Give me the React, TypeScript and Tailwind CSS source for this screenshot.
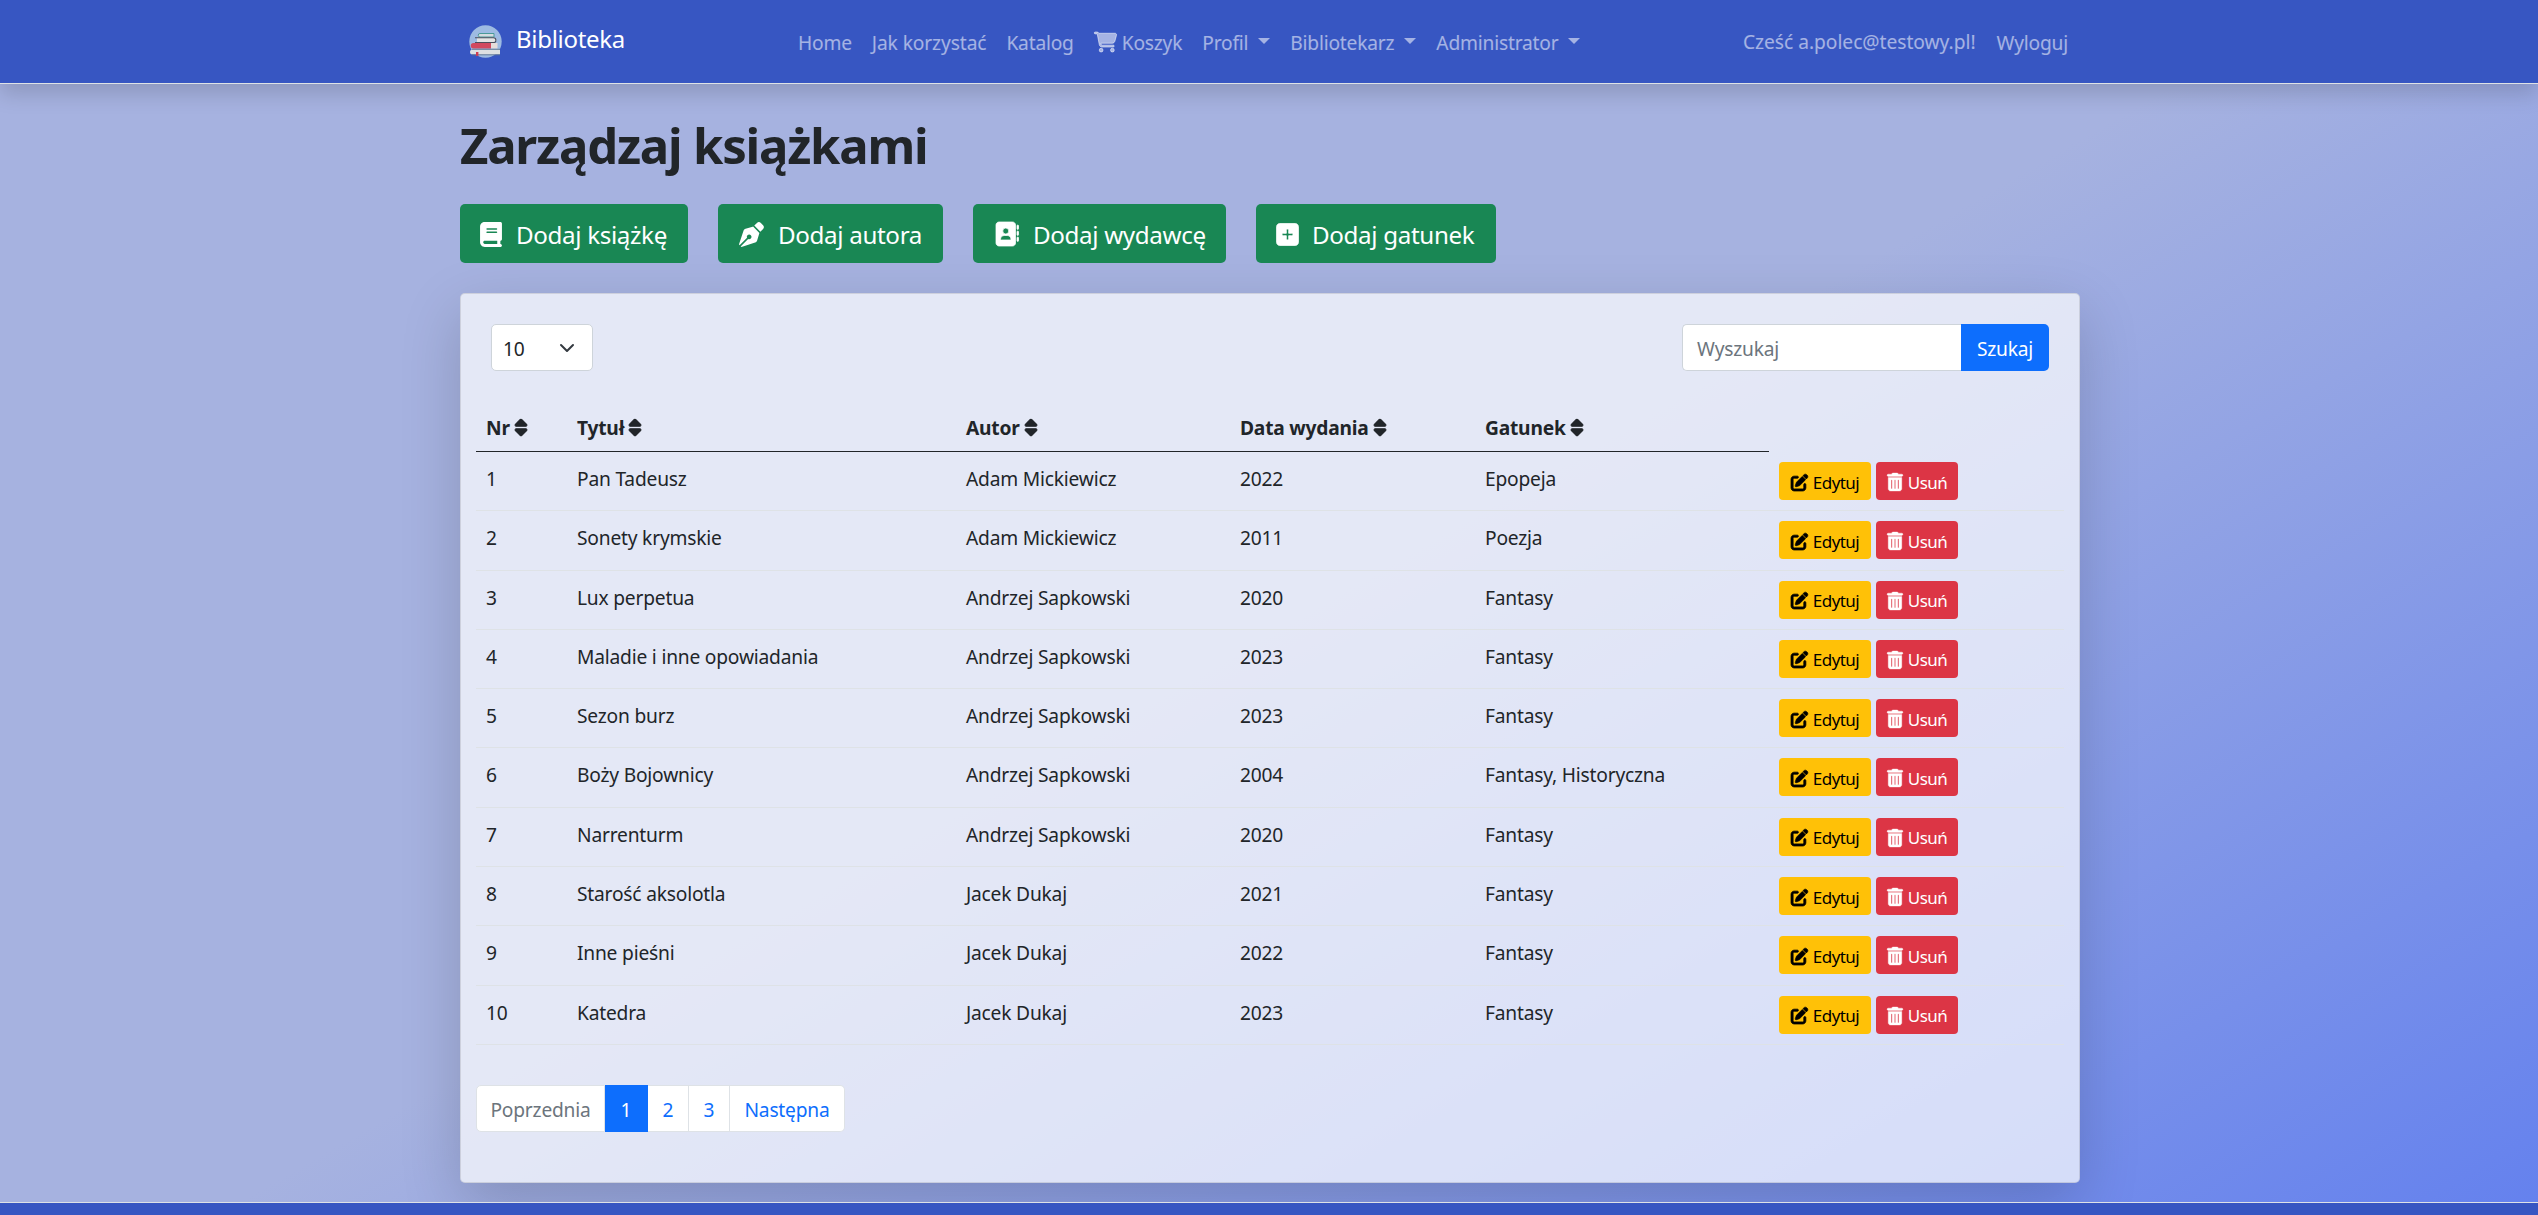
import React from "react";
import { FaAddressBook, FaBook, FaCartShopping, FaPenNib, FaPenToSquare, FaSort, FaSquarePlus, FaTrashCan } from "react-icons/fa6";

const books = [
  ["Pan Tadeusz", "Adam Mickiewicz", "2022", "Epopeja"],
  ["Sonety krymskie", "Adam Mickiewicz", "2011", "Poezja"],
  ["Lux perpetua", "Andrzej Sapkowski", "2020", "Fantasy"],
  ["Maladie i inne opowiadania", "Andrzej Sapkowski", "2023", "Fantasy"],
  ["Sezon burz", "Andrzej Sapkowski", "2023", "Fantasy"],
  ["Boży Bojownicy", "Andrzej Sapkowski", "2004", "Fantasy, Historyczna"],
  ["Narrenturm", "Andrzej Sapkowski", "2020", "Fantasy"],
  ["Starość aksolotla", "Jacek Dukaj", "2021", "Fantasy"],
  ["Inne pieśni", "Jacek Dukaj", "2022", "Fantasy"],
  ["Katedra", "Jacek Dukaj", "2023", "Fantasy"],
];

const cols = "grid grid-cols-[91px_389px_274px_245px_294px_295px]";

function Logo() {
  return (
    <svg viewBox="0 0 33 33" className="h-[33px] w-[33px]">
      <circle cx="16.5" cy="16.5" r="16.2" fill="#9dbbe2" />
      <path d="M11 8.5h14v3.5H11a1.7 1.7 0 0 1 0-3.5z" fill="#d5dbe0" stroke="#4a9a98" strokeWidth="1" />
      <path d="M8 12.8h17a2.4 2.4 0 0 1 0 4.8H8z" fill="#e4e4e4" />
      <path d="M6 12.8h18.500a2.400 2.400 0 0 1 0 4.800H6" fill="none" stroke="#4a4f5c" strokeWidth="1.100" />
      <path d="M4.500 18H22v5.500H4.500a2.700 2.700 0 0 1 0-5.500z" fill="#d1495f" />
      <path d="M22 18h6.500v5.500H22z" fill="#e6ddda" />
      <path d="M3.500 24.500H31v5H3.500a2.500 2.500 0 0 1 0-5z" fill="#dde0e2" />
      <path d="M3 24.300h28M3 29.800h28" stroke="#5e7590" strokeWidth=".9" />
      <path d="M7 27h2.400v4.500l-1.200-1L7 31.500z" fill="#cf3b50" />
    </svg>
  );
}

const Caret = () => <span className="ml-[10px] mb-[5px] inline-block border-x-[6px] border-t-[6px] border-x-transparent border-t-current" />;

function AddButton({ icon, label, width }: { icon: React.ReactNode; label: string; width: string }) {
  return (
    <button className={`flex h-[59px] items-center rounded-[5px] bg-[#198754] pl-5 text-[24.2px] text-white ${width}`}>
      {icon}
      <span className="whitespace-nowrap pt-[3px] tracking-[-0.35px]">{label}</span>
    </button>
  );
}

export default function App() {
  return (
    <div className="flex h-[1215px] w-[2538px] flex-col overflow-hidden bg-[linear-gradient(150deg,#a6b2e0_0%,#a6b2e0_50%,#6481ee_100%)] font-['Noto_Sans',sans-serif] text-[19.2px] leading-[30px] tracking-[-0.2px] text-[#212529] [&_svg]:overflow-visible">
      <nav className="relative h-[84px] shrink-0 border-b border-[#dee2e6] bg-[#3756c2] shadow-[0_10px_20px_rgba(0,0,0,0.15)]">
        <div className="mx-auto flex h-[83px] w-[1620px] items-center whitespace-nowrap text-white/55">
          <div className="flex w-[339px] items-center gap-[14px] pl-[10px]">
            <Logo />
            <span className="-mt-[5px] text-[24px] tracking-[-0.3px] text-white">Biblioteka</span>
          </div>
          <div className="flex flex-1 items-center gap-5 pt-[3px]">
            <span>Home</span>
            <span className="tracking-[-0.1px]">Jak korzystać</span>
            <span>Katalog</span>
            <span className="flex items-center gap-[5px]"><FaCartShopping strokeWidth={24} stroke="currentColor" className="-mt-[3px] h-5 w-[23px]" />Koszyk</span>
            <span className="flex items-center">Profil<Caret /></span>
            <span className="flex items-center">Bibliotekarz<Caret /></span>
            <span className="flex items-center">Administrator<Caret /></span>
          </div>
          <div className="flex gap-[21px] pr-[11px] pt-px">
            <span className="tracking-[-0.02px]">Cześć a.polec@testowy.pl!</span>
            <span className="pt-px">Wyloguj</span>
          </div>
        </div>
      </nav>
      <main className="ml-[460px] h-[1118px] w-[1620px] shrink-0">
        <h1 className="h-[120px] pt-[31px] text-[49px] font-bold leading-[60px] tracking-[-1.2px]">Zarządzaj książkami</h1>
        <div className="flex gap-[30px]">
          <AddButton width="w-[228px]" icon={<FaBook className="mr-[14px] mt-px h-[25px] w-[22px]" />} label="Dodaj książkę" />
          <AddButton width="w-[225px]" icon={<FaPenNib className="mr-[13px] mt-px h-[25px] w-[27px]" />} label="Dodaj autora" />
          <AddButton width="w-[253px]" icon={<FaAddressBook stroke="currentColor" strokeWidth={16} className="mr-[13px] mt-px h-[24px] w-[27px]" />} label="Dodaj wydawcę" />
          <AddButton width="w-[240px]" icon={<FaSquarePlus stroke="currentColor" strokeWidth={16} className="mr-[13px] mt-[2px] h-[25px] w-[23px]" />} label="Dodaj gatunek" />
        </div>
        <section className="mt-[30px] h-[890px] rounded-[5px] border border-black/10 bg-white/70 px-[15px] shadow-[0_20px_60px_rgba(0,0,0,0.175)]">
          <div className="flex justify-between px-[15px] pt-[30px]">
            <div className="flex h-[47px] w-[102px] items-center justify-between rounded-[5px] border border-[#ced4da] bg-white pl-[11px] pr-[17px]">
              <span className="pt-[3px]">10</span>
              <svg viewBox="0 0 16 16" className="h-4 w-4" fill="none" stroke="#343a40" strokeWidth="2" strokeLinecap="round" strokeLinejoin="round"><path d="m2 5 6 6 6-6" /></svg>
            </div>
            <div className="flex h-[47px]">
              <div className="flex w-[279px] items-center rounded-l-[5px] border border-r-0 border-[#ced4da] bg-white pl-[14px] pt-[3px] text-[#6c757d]">Wyszukaj</div>
              <div className="flex w-[88px] items-center justify-center rounded-r-[5px] bg-[#0d6efd] pt-[3px] text-white">Szukaj</div>
            </div>
          </div>
          <div className="mt-[30px] grid h-[51px] w-[1293px] grid-cols-[91px_389px_274px_245px_294px] items-center border-b border-[#212529] font-bold">
            {["Nr", "Tytuł", "Autor", "Data wydania", "Gatunek"].map((h) => (
              <span key={h} className="flex items-center gap-[4px] whitespace-nowrap pl-[10px] pt-[4px]">{h}<FaSort stroke="currentColor" strokeWidth={28} className="-mt-[2px] h-[19px] w-[14px]" /></span>
            ))}
          </div>
          {books.map((b, i) => (
            <div key={b[0]} className={`${cols} h-[59.3px] whitespace-nowrap border-b border-[#dee2e6] *:pl-[10px]`}>
              <span className="pt-[12px]">{i + 1}</span>
              {b.map((v, j) => <span key={j} className="pt-[12px]">{v}</span>)}
              <div className="flex gap-[5px] pt-[10px] text-[17px] tracking-[-0.55px]">
                <span className="flex h-[38px] w-[92px] items-center justify-center gap-[5px] rounded-[4px] bg-[#ffc107] text-black"><FaPenToSquare stroke="currentColor" strokeWidth={22} className="mt-[2px] h-[17px] w-[17px]" /><span className="pt-[3px]">Edytuj</span></span>
                <span className="flex h-[38px] w-[82px] items-center justify-center gap-[5px] rounded-[4px] bg-[#dc3545] text-white"><FaTrashCan stroke="currentColor" strokeWidth={10} className="mt-[2px] h-[18px] w-[16px]" /><span className="pt-[3px]">Usuń</span></span>
              </div>
            </div>
          ))}
          <div className="mt-[40px] flex h-[47px] w-[369px] *:flex *:items-center *:justify-center *:border-y *:border-r *:border-[#dee2e6] *:bg-white *:pt-[3px] *:text-[#0d6efd]">
            <span className="w-[129px] rounded-l-[5px] border-l text-[#6c757d]!">Poprzednia</span>
            <span className="w-[43px] border-[#0d6efd]! bg-[#0d6efd]! text-white!">1</span>
            <span className="w-[41px]">2</span>
            <span className="w-[41px]">3</span>
            <span className="w-[115px] rounded-r-[5px]">Następna</span>
          </div>
        </section>
      </main>
      <footer className="relative h-[13px] shrink-0 border-t border-[#dee2e6] bg-[#3756c2]" />
    </div>
  );
}
